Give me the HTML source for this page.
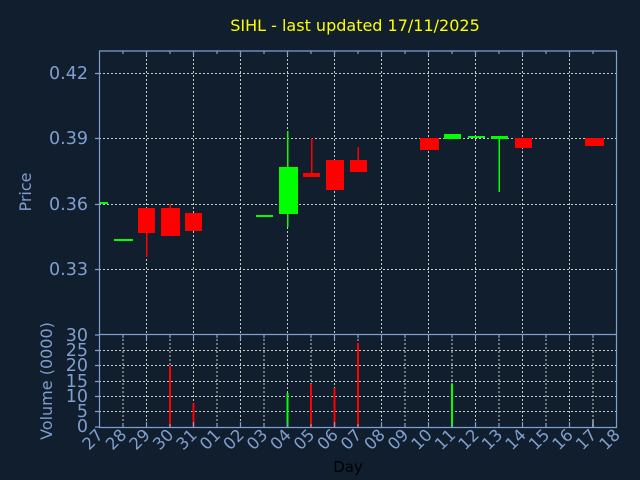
<!DOCTYPE html>
<html><head><meta charset="utf-8"><style>
html,body{margin:0;padding:0;background:#111e2e;}
svg{display:block;font-family:"DejaVu Sans","Liberation Sans",sans-serif;}
</style></head><body>
<svg width="640" height="480" viewBox="0 0 640 480" xmlns="http://www.w3.org/2000/svg">
<rect width="640" height="480" fill="#111e2e"/>
<text x="355" y="31" fill="#ffff00" font-size="16" text-anchor="middle">SIHL - last updated 17/11/2025</text>
<g stroke="#c8c8c8" stroke-width="1" stroke-dasharray="2,2" fill="none">
<path d="M99 73.5H616M99 138.5H616M99 204.5H616M99 269.5H616"/>
<path d="M146.5 51V334M193.5 51V334M240.5 51V334M287.5 51V334M334.5 51V334M381.5 51V334M428.5 51V334M475.5 51V334M522.5 51V334M569.5 51V334"/>
<path d="M99 350.5H616M99 365.5H616M99 381.5H616M99 396.5H616M99 411.5H616"/>
<path d="M123 335V427M146.5 335V427M170 335V427M193.5 335V427M217 335V427M240.5 335V427M264 335V427M287.5 335V427M311 335V427M334.5 335V427M358 335V427M381.5 335V427M405 335V427M428.5 335V427M452 335V427M475.5 335V427M499 335V427M522.5 335V427M546 335V427M569.5 335V427M593 335V427"/>
</g>
<g fill="#ff0000" stroke="none">
<rect x="146" y="233" width="1.5" height="24"/>
<rect x="138" y="208" width="17" height="25"/>
<rect x="169.5" y="204" width="1.5" height="4"/>
<rect x="161" y="208" width="19" height="28"/>
<rect x="185" y="213" width="17" height="18"/>
<rect x="311" y="138" width="1.5" height="35"/>
<rect x="303" y="173" width="17" height="4"/>
<rect x="326" y="160" width="18" height="30"/>
<rect x="357.5" y="147" width="1.5" height="13"/>
<rect x="350" y="160" width="17" height="12"/>
<rect x="420" y="138" width="19" height="12"/>
<rect x="515" y="138" width="17" height="10"/>
<rect x="585" y="138" width="19" height="8"/>
</g>
<g fill="#00ff00" stroke="none">
<rect x="99" y="202" width="9" height="2"/>
<rect x="114" y="239" width="19" height="2"/>
<rect x="256" y="215" width="17" height="2"/>
<rect x="287" y="131" width="1.5" height="96"/>
<rect x="279" y="167" width="19" height="47"/>
<rect x="444" y="134" width="17" height="5"/>
<rect x="468" y="136" width="17" height="2"/>
<rect x="498.5" y="136" width="1.5" height="56"/>
<rect x="491" y="136" width="17" height="3"/>
</g>
<g stroke-width="2">
<path d="M170 366V427M193.5 403V427M311 384V427M334.5 388V427M358 343V427" stroke="#ff0000"/>
<path d="M287.5 393V427M452 384V427" stroke="#00ff00"/>
<path d="M593 420V427" stroke="#888"/>
</g>
<g stroke="#7f9fcf" stroke-width="1.2" fill="none">
<path d="M99.5 51V427.5H616.5V51H99.5Z"/>
<path d="M99.5 334.5H616.5"/>
<path d="M95 73.5H99M95 138.5H99M95 204.5H99M95 269.5H99M95 335H99M95 350.5H99M95 365.5H99M95 381.5H99M95 396.5H99M95 411.5H99M95 427H99"/>
<path d="M123 51v3M146.5 51v5M170 51v3M193.5 51v5M217 51v3M240.5 51v5M264 51v3M287.5 51v5M311 51v3M334.5 51v5M358 51v3M381.5 51v5M405 51v3M428.5 51v5M452 51v3M475.5 51v5M499 51v3M522.5 51v5M546 51v3M569.5 51v5M593 51v3"/>
<path d="M123 427v-3M146.5 427v-5M170 427v-3M193.5 427v-5M217 427v-3M240.5 427v-5M264 427v-3M287.5 427v-5M311 427v-3M334.5 427v-5M358 427v-3M381.5 427v-5M405 427v-3M428.5 427v-5M452 427v-3M475.5 427v-5M499 427v-3M522.5 427v-5M546 427v-3M569.5 427v-5M593 427v-3"/>
<path d="M123 335v3M146.5 335v5M170 335v3M193.5 335v5M217 335v3M240.5 335v5M264 335v3M287.5 335v5M311 335v3M334.5 335v5M358 335v3M381.5 335v5M405 335v3M428.5 335v5M452 335v3M475.5 335v5M499 335v3M522.5 335v5M546 335v3M569.5 335v5M593 335v3"/>
</g>
<g fill="#7f9fcf" font-size="17.5" text-anchor="end">
<text x="88" y="79">0.42</text>
<text x="88" y="144">0.39</text>
<text x="88" y="210">0.36</text>
<text x="88" y="275">0.33</text>
<text x="88" y="341">30</text>
<text x="88" y="356">25</text>
<text x="88" y="371">20</text>
<text x="88" y="387">15</text>
<text x="88" y="402">10</text>
<text x="88" y="417">5</text>
<text x="88" y="432">0</text>
</g>
<g fill="#7f9fcf" font-size="16" text-anchor="middle">
<text transform="translate(31,192) rotate(-90)">Price</text>
<text transform="translate(52,381) rotate(-90)">Volume (0000)</text>
</g>
<g fill="#7f9fcf" font-size="16.5" text-anchor="end">
<text transform="translate(104,436) rotate(-45)">27</text>
<text transform="translate(127.5,436) rotate(-45)">28</text>
<text transform="translate(151,436) rotate(-45)">29</text>
<text transform="translate(174.5,436) rotate(-45)">30</text>
<text transform="translate(198,436) rotate(-45)">31</text>
<text transform="translate(221.5,436) rotate(-45)">01</text>
<text transform="translate(245,436) rotate(-45)">02</text>
<text transform="translate(268.5,436) rotate(-45)">03</text>
<text transform="translate(292,436) rotate(-45)">04</text>
<text transform="translate(315.5,436) rotate(-45)">05</text>
<text transform="translate(339,436) rotate(-45)">06</text>
<text transform="translate(362.5,436) rotate(-45)">07</text>
<text transform="translate(386,436) rotate(-45)">08</text>
<text transform="translate(409.5,436) rotate(-45)">09</text>
<text transform="translate(433,436) rotate(-45)">10</text>
<text transform="translate(456.5,436) rotate(-45)">11</text>
<text transform="translate(480,436) rotate(-45)">12</text>
<text transform="translate(503.5,436) rotate(-45)">13</text>
<text transform="translate(527,436) rotate(-45)">14</text>
<text transform="translate(550.5,436) rotate(-45)">15</text>
<text transform="translate(574,436) rotate(-45)">16</text>
<text transform="translate(597.5,436) rotate(-45)">17</text>
<text transform="translate(621,436) rotate(-45)">18</text>
</g>
<text x="348" y="472" fill="#000000" font-size="15" text-anchor="middle">Day</text>
</svg>
</body></html>
